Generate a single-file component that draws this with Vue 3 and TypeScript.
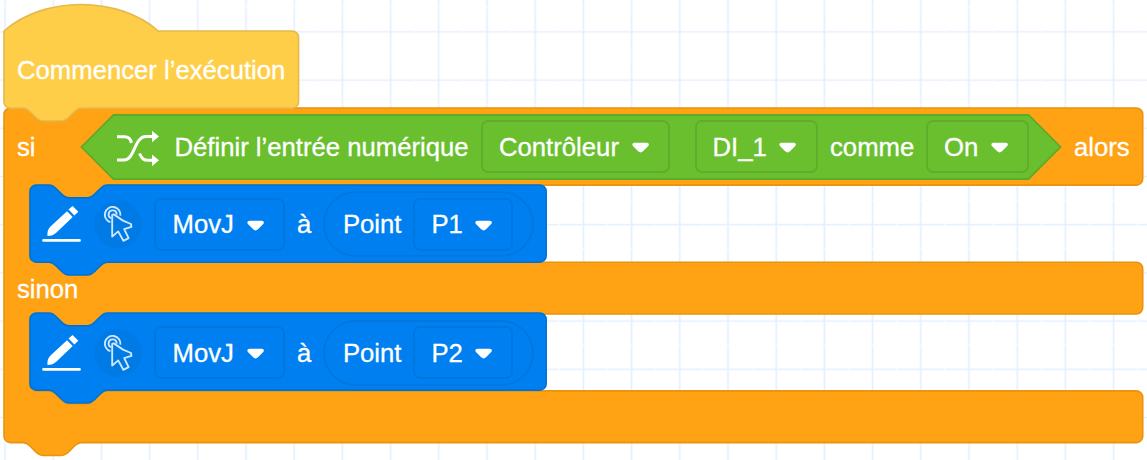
<script setup lang="ts">
const SCALE = 1.607
const NOTCH = 'c2,0 3,1 4,2 l4,4 c1,1 2,2 4,2 h12 c2,0 3,-1 4,-2 l4,-4 c1,-1 2,-2 4,-2'
const TAB = 'c-2,0 -3,1 -4,2 l-4,4 c-1,1 -2,2 -4,2 h-12 c-2,0 -3,-1 -4,-2 l-4,-4 c-1,-1 -2,-2 -4,-2'

// Block outlines, in unscaled workspace units
const hatPath = `M0,0 c25,-22 71,-22 96,0 H179.3 a4,4 0 0 1 4,4 V44 a4,4 0 0 1 -4,4 H48 ${TAB} H4 a4,4 0 0 1 -4,-4 z`
const right = 704.6
const mouth = (y: number): string =>
  `H64 ${TAB} h-8 a4,4 0 0 0 -4,4 V${y - 4} a4,4 0 0 0 4,4 h8 ${NOTCH} H${right}`
const ifPath =
  `M0,4 a4,4 0 0 1 4,-4 h8 ${NOTCH} H${right} a4,4 0 0 1 4,4 V44 a4,4 0 0 1 -4,4 ` +
  `${mouth(96)} a4,4 0 0 1 4,4 V124.2 a4,4 0 0 1 -4,4 ` +
  `${mouth(176)} a4,4 0 0 1 4,4 V204.2 a4,4 0 0 1 -4,4 H48 ${TAB} H4 a4,4 0 0 1 -4,-4 z`
const movePath = `M0,4 a4,4 0 0 1 4,-4 h8 ${NOTCH} H317.2 a4,4 0 0 1 4,4 V44 a4,4 0 0 1 -4,4 H48 ${TAB} H4 a4,4 0 0 1 -4,-4 z`
const arrowPath = 'M2.6,0.8 H14.6 C17,0.8 17.4,2.8 16,4.3 L11,9.3 Q8.6,11.6 6.2,9.3 L1.2,4.3 C-0.2,2.8 0.2,0.8 2.6,0.8 z'

interface Move { id: string; command: string; point: string }
const thenMove: Move = { id: 'then', command: 'MovJ', point: 'P1' }
const elseMove: Move = { id: 'else', command: 'MovJ', point: 'P2' }
const moves: Move[] = [thenMove, elseMove]
const scaled = `scale(${SCALE})`
</script>

<template>
  <main class="workspace">
    <svg class="grid" width="1147" height="460">
      <defs>
        <pattern id="tile" x="-19.1" y="7.8" width="48.2" height="48.2" patternUnits="userSpaceOnUse">
          <path d="M0.5,24.1 H47.7 M24.1,0.5 V47.7" stroke="#e3f0ff" stroke-width="1.7" />
        </pattern>
      </defs>
      <rect width="1147" height="460" fill="url(#tile)" />
    </svg>

    <section class="block start">
      <svg class="shape" width="1" height="1"><path :d="hatPath" :transform="scaled" /></svg>
      <span>Commencer l’exécution</span>
    </section>

    <section class="block condition">
      <svg class="shape" width="1" height="1"><path :d="ifPath" :transform="scaled" /></svg>
      <div class="row head">
        <span class="si">si</span>
        <div class="test">
          <svg class="hexagon" width="982" height="66"><path d="M33.5,0.9 H948.5 L980.6,33 L948.5,65.1 H33.5 L1.4,33 z" /></svg>
          <svg class="shuffle" width="44" height="38" viewBox="0 0 44 38">
            <path d="M1,6.7 H8.5 Q14.5,6.7 15.3,13 M1,30 H8 C19,30 18,6.5 30,6.5 H37 M23.5,23.5 C26,29 28,30.3 32,30.3 H37" fill="none" stroke="#fff" stroke-width="3" />
            <path d="M36,0.7 L43,6.6 L36,12.3 z M36,24.4 L43,30.3 L36,36.2 z" fill="#fff" />
          </svg>
          <span class="define">Définir l’entrée numérique</span>
          <div class="field source">Contrôleur<svg class="arrow" width="17" height="12"><path :d="arrowPath" /></svg></div>
          <div class="field input">DI_1<svg class="arrow" width="17" height="12"><path :d="arrowPath" /></svg></div>
          <span class="as">comme</span>
          <div class="field state">On<svg class="arrow" width="17" height="12"><path :d="arrowPath" /></svg></div>
        </div>
        <span class="then">alors</span>
      </div>

      <template v-for="move in moves" :key="move.id">
        <div class="block move">
          <svg class="shape" width="1" height="1"><path :d="movePath" :transform="scaled" /></svg>
          <svg class="pencil" width="40" height="38" viewBox="0 0 40 38">
            <path d="M5.5,31 C5,27 6,24 8.5,21.5 L25,6.2 L30.7,12 L14.5,27.5 C12,30 9,31 5.5,31 z M26.5,4.5 L30.6,1 L36.3,6.8 L32.4,10.4 z" fill="#fff" />
            <path d="M1.5,35.4 H37.5" stroke="#fff" stroke-width="2.6" stroke-linecap="round" />
          </svg>
          <svg class="pointer" width="48" height="48" viewBox="0 0 48 48">
            <circle cx="24" cy="24" r="24" fill="#007ae5" />
            <g fill="none" stroke="#cfe7ff" stroke-width="1.9" stroke-linejoin="round">
              <path d="M16.4,22.2 A7.8,7.8 0 1 1 26.4,15.6" />
              <path d="M17.4,18.2 A4,4 0 1 1 22.6,14.6" />
              <path d="M18.2,15 V36.6 L24.2,31.4 L29.4,40.8 L34.6,38.2 L30.2,29.2 L37.4,26.8 L37,24 L29,20.6 L19.8,14.4 z" />
            </g>
          </svg>
          <div class="field command">{{ move.command }}<svg class="arrow" width="17" height="12"><path :d="arrowPath" /></svg></div>
          <span class="to">à</span>
          <div class="target">
            <span>Point</span>
            <div class="field point">{{ move.point }}<svg class="arrow" width="17" height="12"><path :d="arrowPath" /></svg></div>
          </div>
        </div>
        <div v-if="move.id === 'then'" class="row otherwise">sinon</div>
      </template>
    </section>
  </main>
</template>

<style>
body {
  margin: 0;
  background: #fff;
}
</style>

<style scoped>
.workspace {
  position: relative;
  box-sizing: border-box;
  width: 1147px;
  height: 460px;
  padding: 30.6px 0 0 4px;
  overflow: hidden;
  color: #fff;
  font: 25.7px/30px "Liberation Sans", Arial, sans-serif;
  -webkit-text-stroke: 0.3px #fff;
  white-space: nowrap;
}
.grid {
  position: absolute;
  top: 0;
  left: 0;
}
.block {
  position: relative;
}
.shape {
  position: absolute;
  top: 0;
  left: 0;
  overflow: visible;
}
.shape path {
  stroke-width: 1;
}
.start {
  z-index: 1;
  display: flex;
  align-items: center;
  box-sizing: border-box;
  height: 77.1px;
  padding: 2px 0 0 13px;
}
.start span {
  position: relative;
}
.start .shape path {
  fill: #ffce49;
  stroke: #e5b94c;
}
.condition > .shape path {
  fill: #ffa213;
  stroke: #e8940f;
}
.row {
  position: relative;
  display: flex;
  align-items: center;
  box-sizing: border-box;
}
.head {
  height: 77.1px;
  padding: 1.2px 0 0 13px;
}
.si {
  width: 63px;
  padding-top: 1px;
}
.test {
  position: relative;
  display: flex;
  align-items: center;
  width: 981px;
  height: 66px;
}
.hexagon {
  position: absolute;
  top: 0;
  left: 0;
}
.hexagon path {
  fill: #6abf2e;
  stroke: #5ba92a;
  stroke-width: 1.6;
}
.shuffle {
  position: relative;
  margin: 4px 0 0 35.5px;
}
.define {
  position: relative;
  width: 306.5px;
  margin-left: 15px;
}
.then {
  margin-left: 13px;
}
.field {
  position: relative;
  box-sizing: border-box;
  display: flex;
  flex: none;
  align-items: center;
  justify-content: space-between;
  height: 53px;
  padding: 0 19.3px 0 16px;
  border: 2px solid #60ad2a;
  border-radius: 7px;
}
.arrow {
  fill: #fff;
  margin-top: 3px;
}
.source {
  width: 189px;
}
.input {
  width: 123px;
  margin-left: 24.5px;
}
.as {
  position: relative;
  width: 84px;
  margin: 0 12px 0 12.5px;
}
.state {
  width: 103px;
}
.move {
  z-index: 1;
  display: flex;
  align-items: center;
  box-sizing: border-box;
  width: 516.8px;
  height: 77.1px;
  margin-left: 25.7px;
  padding-top: 2px;
}
.move > .shape path {
  fill: #0080f0;
  stroke: #0072d6;
}
.pencil {
  position: relative;
  margin: 0 0 0 12.8px;
}
.pointer {
  position: relative;
  margin-left: 12px;
}
.move .field {
  border-color: #0077df;
}
.move .command {
  width: 131px;
  margin-left: 12px;
}
.to {
  position: relative;
  margin-left: 11.5px;
}
.target {
  position: relative;
  box-sizing: border-box;
  display: flex;
  align-items: center;
  width: 210.5px;
  height: 66px;
  margin-left: 11.8px;
  padding-left: 17.8px;
  border: 2px solid #0077df;
  border-radius: 33px;
}
.target .point {
  width: 100px;
  margin-left: 12px;
}
.otherwise {
  height: 51.4px;
  padding: 2px 0 0 13px;
}
</style>
